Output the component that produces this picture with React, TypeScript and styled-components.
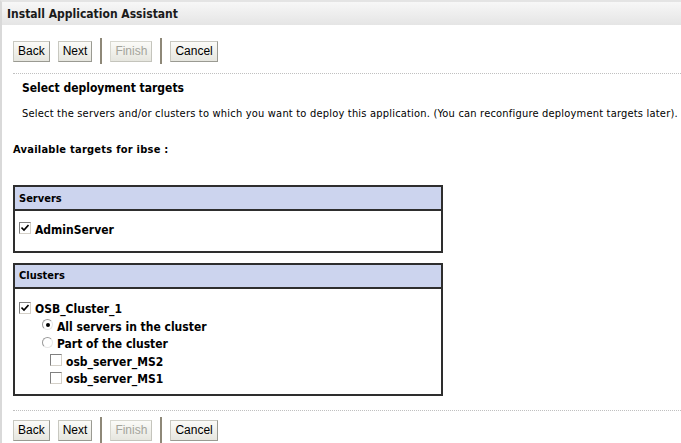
import React, { FC } from 'react';
import styled, { createGlobalStyle } from 'styled-components';

const GlobalStyle = createGlobalStyle`
  html, body {
    margin: 0;
    padding: 0;
    background: #ffffff;
  }
  body {
    font-family: Tahoma, "DejaVu Sans Condensed", "DejaVu Sans", sans-serif;
    font-size: 11px;
    color: #000000;
  }
`;

const Page = styled.div`
  width: 681px;
  height: 443px;
  box-sizing: border-box;
  border-left: 2px solid #d9d9d9;
  border-top: 2px solid #e4e4e4;
  overflow: hidden;
`;

const TitleBar = styled.div`
  height: 23px;
  padding-left: 5px;
  display: flex;
  align-items: center;
  background: linear-gradient(#f7f7f7, #e5e5e5);
  font-weight: bold;
  font-size: 12px;
  color: #1a1a1a;
`;

const Toolbar = styled.div<{ $top: number }>`
  display: flex;
  align-items: center;
  gap: 8px;
  padding: ${p => p.$top}px 0 0 11px;
`;

const Button = styled.button<{ $disabled?: boolean }>`
  font-family: "Liberation Sans", Arial, sans-serif;
  font-size: 12px;
  height: 21px;
  padding: 0 4px;
  margin: 0;
  border: 1px solid ${p => (p.$disabled ? '#c4c4bc' : '#9a9a92')};
  border-top-color: ${p => (p.$disabled ? '#d8d8d0' : '#c8c8c0')};
  border-left-color: ${p => (p.$disabled ? '#d8d8d0' : '#c8c8c0')};
  background: linear-gradient(#fbfbf8, #e6e6df);
  color: ${p => (p.$disabled ? '#a4a49c' : '#000000')};
  cursor: default;
`;

const Divider = styled.span`
  width: 2px;
  height: 26px;
  background: #8e8878;
`;

const Dotted = styled.div<{ $top: number }>`
  margin: ${p => p.$top}px 0 0 11px;
  border-top: 1px dotted #c0c0c0;
`;

const Heading = styled.div<{ $left: number; $top: number; $size: number; $spacing: number }>`
  font-weight: bold;
  font-size: ${p => p.$size}px;
  letter-spacing: ${p => p.$spacing}px;
  margin: ${p => p.$top}px 0 0 ${p => p.$left}px;
  line-height: 14px;
`;

const Text = styled.div`
  margin: 12px 0 0 20px;
  line-height: 14px;
  letter-spacing: 0.2px;
  white-space: nowrap;
`;

const Panel = styled.div<{ $top: number }>`
  width: 430px;
  margin: ${p => p.$top}px 0 0 11px;
  box-sizing: border-box;
  border: 2px solid #2e2e2e;
`;

const PanelHead = styled.div`
  height: 22px;
  display: flex;
  align-items: center;
  padding-left: 4px;
  background: #ccd4ee;
  border-bottom: 2px solid #2e2e2e;
  font-weight: bold;
`;

const PanelBody = styled.div<{ $pad: string }>`
  padding: ${p => p.$pad};
  display: flex;
  flex-direction: column;
  gap: 4px;
`;

const Option = styled.div<{ $indent: number }>`
  display: flex;
  align-items: center;
  gap: 4px;
  padding-left: ${p => p.$indent}px;
  height: 13.5px;
  font-weight: bold;
  font-size: 12px;
`;

const Box = styled.span`
  width: 12px;
  height: 12px;
  box-sizing: border-box;
  border: 1px solid #808080;
  border-right-color: #d4d0c8;
  border-bottom-color: #d4d0c8;
  background: #ffffff;
  display: inline-flex;
  align-items: center;
  justify-content: center;
  margin-top: -3px;
`;

const Radio = styled.span`
  width: 11px;
  height: 11px;
  box-sizing: border-box;
  border-radius: 50%;
  border: 1px solid #9a9a9a;
  border-right-color: #e6e6e6;
  border-bottom-color: #e6e6e6;
  background: #ffffff;
  display: inline-flex;
  align-items: center;
  justify-content: center;
  margin-top: -4px;
`;

const Dot = styled.span`
  width: 4px;
  height: 4px;
  border-radius: 50%;
  background: #000000;
`;

const Check: FC = () => (
  <svg width="8" height="8" viewBox="0 0 8 8">
    <path d="M0.5 3.5 L3 6 L7.5 1" stroke="#000" strokeWidth="1.6" fill="none" />
  </svg>
);

type Item = { label: string; kind: 'check' | 'empty' | 'radioOn' | 'radioOff'; indent: number };

const clusterItems: Item[] = [
  { label: 'OSB_Cluster_1', kind: 'check', indent: 0 },
  { label: 'All servers in the cluster', kind: 'radioOn', indent: 23 },
  { label: 'Part of the cluster', kind: 'radioOff', indent: 23 },
  { label: 'osb_server_MS2', kind: 'empty', indent: 31 },
  { label: 'osb_server_MS1', kind: 'empty', indent: 31 },
];

const renderMark = (kind: Item['kind']) => {
  switch (kind) {
    case 'check':
      return (
        <Box>
          <Check />
        </Box>
      );
    case 'empty':
      return <Box />;
    case 'radioOn':
      return (
        <Radio>
          <Dot />
        </Radio>
      );
    default:
      return <Radio />;
  }
};

const Buttons: FC<{ top: number }> = ({ top }) => (
  <Toolbar $top={top}>
    <Button>Back</Button>
    <Button>Next</Button>
    <Divider />
    <Button $disabled>Finish</Button>
    <Divider />
    <Button>Cancel</Button>
  </Toolbar>
);

const App: FC = () => (
  <Page>
    <GlobalStyle />
    <TitleBar>Install Application Assistant</TitleBar>
    <Buttons top={13} />
    <Dotted $top={9} />
    <Heading $left={20} $top={7} $size={12} $spacing={0}>
      Select deployment targets
    </Heading>
    <Text>
      Select the servers and/or clusters to which you want to deploy this application. (You can
      reconfigure deployment targets later).
    </Text>
    <Heading $left={11} $top={22} $size={11} $spacing={0.25}>
      Available targets for ibse :
    </Heading>
    <Panel $top={28}>
      <PanelHead>Servers</PanelHead>
      <PanelBody $pad="12px 0 14px 4px">
        <Option $indent={0}>
          {renderMark('check')}
          AdminServer
        </Option>
      </PanelBody>
    </Panel>
    <Panel $top={10}>
      <PanelHead>Clusters</PanelHead>
      <PanelBody $pad="14px 0 8px 4px">
        {clusterItems.map(item => (
          <Option key={item.label} $indent={item.indent}>
            {renderMark(item.kind)}
            {item.label}
          </Option>
        ))}
      </PanelBody>
    </Panel>
    <Dotted $top={14} />
    <Buttons top={6} />
  </Page>
);

export default App;
